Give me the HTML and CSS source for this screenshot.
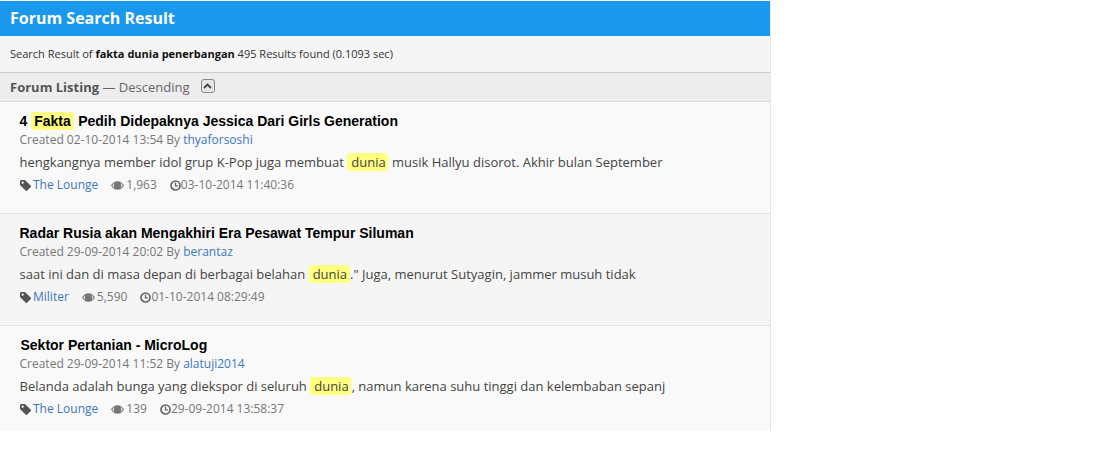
FILE: index.html
```html
<!DOCTYPE html>
<html lang="id">
<head>
<meta charset="utf-8">
<title>Forum Search Result</title>
<link rel="stylesheet" href="styles.css">
</head>
<body>
<svg class="defs" width="0" height="0" aria-hidden="true">
  <symbol id="i-tag" viewBox="0 0 11 11"><path d="M0 1.200A1.200 1.200 0 0 1 1.200 0h3.400a1.200 1.200 0 0 1 .9.400l5.100 5.100a1.200 1.200 0 0 1 0 1.700l-3.400 3.400a1.200 1.200 0 0 1-1.700 0L.4 5.500a1.200 1.200 0 0 1-.4-.9zM2.700 1.600a1.100 1.100 0 1 0 0 2.200 1.100 1.100 0 0 0 0-2.200z" fill="currentColor" fill-rule="evenodd"/></symbol>
  <symbol id="i-eye" viewBox="0 0 13 9"><path d="M6.500 .2C3.500 .2 1.200 2.300 0 4.500c1.200 2.200 3.500 4.300 6.500 4.300S11.800 6.700 13 4.500C11.800 2.300 9.500 .2 6.500 .2zM1.300 4.500C2 3.400 2.900 2.500 4 1.900a3.300 3.300 0 0 0 0 5.200C2.900 6.500 2 5.600 1.300 4.500zm10.400 0C11 5.600 10.100 6.500 9 7.100a3.300 3.300 0 0 0 0-5.200c1.100.6 2 1.500 2.700 2.600z" fill="currentColor" fill-rule="evenodd"/><circle cx="6.500" cy="4.500" r="2.300" fill="currentColor"/></symbol>
  <symbol id="i-clock" viewBox="0 0 11 11"><circle cx="5.500" cy="5.500" r="4.500" fill="none" stroke="currentColor" stroke-width="1.700"/><path d="M5.500 2.600v3.200h2.400" fill="none" stroke="currentColor" stroke-width="1.300"/></symbol>
</svg>
<main class="panel">
  <h1 class="panel-title">Forum Search Result</h1>
  <p class="summary">Search Result of <strong>fakta dunia penerbangan</strong> 495 Results found (0.1093 sec)</p>
  <div class="listing-head">
    <span><strong>Forum Listing</strong> — Descending</span>
    <button class="sort-toggle" type="button" aria-label="Collapse">
      <svg width="9" height="6" viewBox="0 0 9 6"><path d="M1 5l3.500-3.500L8 5" fill="none" stroke="currentColor" stroke-width="1.800"/></svg>
    </button>
  </div>
  <article class="result">
    <h2 class="result-title">4 <mark class="hit">Fakta</mark> Pedih Didepaknya Jessica Dari Girls Generation</h2>
    <p class="byline">Created 02-10-2014 13:54 By <a href="#">thyaforsoshi</a></p>
    <p class="excerpt">hengkangnya member idol grup K-Pop juga membuat <mark class="hit">dunia</mark> musik Hallyu disorot. Akhir bulan September</p>
    <div class="meta">
      <span class="meta-item"><svg class="ic-tag"><use href="#i-tag"/></svg><a href="#">The Lounge</a></span>
      <span class="meta-item"><svg class="ic-eye"><use href="#i-eye"/></svg>1,963</span>
      <span class="meta-item"><svg class="ic-clock"><use href="#i-clock"/></svg>03-10-2014 11:40:36</span>
    </div>
  </article>
  <article class="result">
    <h2 class="result-title">Radar Rusia akan Mengakhiri Era Pesawat Tempur Siluman</h2>
    <p class="byline">Created 29-09-2014 20:02 By <a href="#">berantaz</a></p>
    <p class="excerpt">saat ini dan di masa depan di berbagai belahan <mark class="hit">dunia</mark>." Juga, menurut Sutyagin, jammer musuh tidak</p>
    <div class="meta">
      <span class="meta-item"><svg class="ic-tag"><use href="#i-tag"/></svg><a href="#">Militer</a></span>
      <span class="meta-item"><svg class="ic-eye"><use href="#i-eye"/></svg>5,590</span>
      <span class="meta-item"><svg class="ic-clock"><use href="#i-clock"/></svg>01-10-2014 08:29:49</span>
    </div>
  </article>
  <article class="result">
    <h2 class="result-title nudge">Sektor Pertanian - MicroLog</h2>
    <p class="byline">Created 29-09-2014 11:52 By <a href="#">alatuji2014</a></p>
    <p class="excerpt">Belanda adalah bunga yang diekspor di seluruh <mark class="hit">dunia</mark>, namun karena suhu tinggi dan kelembaban sepanj</p>
    <div class="meta">
      <span class="meta-item"><svg class="ic-tag"><use href="#i-tag"/></svg><a href="#">The Lounge</a></span>
      <span class="meta-item"><svg class="ic-eye"><use href="#i-eye"/></svg>139</span>
      <span class="meta-item"><svg class="ic-clock"><use href="#i-clock"/></svg>29-09-2014 13:58:37</span>
    </div>
  </article>
</main>
</body>
</html>
```

FILE: styles.css
```css
* { box-sizing: border-box; }
html, body { margin: 0; background: #fff; }
body { padding-top: 1px; font-family: "Open Sans", sans-serif; color: #555; }
.defs { position: absolute; }
.panel { width: 771px; border-right: 1px solid #e5e5e5; height: 430px; overflow: hidden; background: #f9f9f9; }
.panel-title { margin: 0; height: 35px; padding-left: 10px; background: #1998ee; color: #fff; font-size: 16px; line-height: 35px; font-weight: 700; }
.summary { margin: 0; height: 36px; padding-left: 10px; background: #f5f5f5; color: #333; font-size: 11px; line-height: 36px; }
.summary strong { color: #111; }
.listing-head { display: flex; align-items: center; gap: 11px; height: 30px; padding-left: 10px; background: #ededed; border-top: 1px solid #ccc; border-bottom: 1px solid #ddd; color: #666; font-size: 13px; }
.listing-head strong { color: #555; }
.sort-toggle { display: flex; align-items: center; justify-content: center; width: 14px; height: 14px; padding: 0; border: 1px solid #888; border-radius: 3px; background: #e6e6e6; color: #445; margin-bottom: 2px; }
.result { height: 112px; padding: 11px 20px 0 19.5px; border-bottom: 1px solid #e2e2e2; background: #f9f9f9; }
.result:nth-of-type(2) { background: #f5f5f5; }
.result-title { margin: 0; color: #000; font-family: "Liberation Sans", sans-serif; font-size: 14px; font-weight: 700; line-height: 17px; }
.nudge { padding-left: 1px; }
.result-title .hit { padding: 1px 3.5px; margin: 0 0 0 -.5px; }
.byline { margin: 1px 0 0; color: #777; font-size: 12px; line-height: 18px; }
a { color: #3d77c0; text-decoration: none; }
.excerpt { margin: 4px 0 0; color: #444; font-size: 13px; line-height: 18px; white-space: nowrap; }
.hit { padding: 0 2.5px 0 4px; margin-right: .5px; background: #ffff80; color: inherit; border-radius: 3px; }
.meta { display: flex; gap: 13px; margin-top: 5px; color: #777; font-size: 12px; line-height: 18px; }
.meta-item { display: flex; align-items: center; }
.ic-tag { width: 11px; height: 11px; margin: 0 2.500px 0 0; color: #555; }
.ic-eye { width: 13px; height: 9px; margin-right: 2px; color: #777; }
.ic-clock { width: 11px; height: 11px; color: #666; }
```
